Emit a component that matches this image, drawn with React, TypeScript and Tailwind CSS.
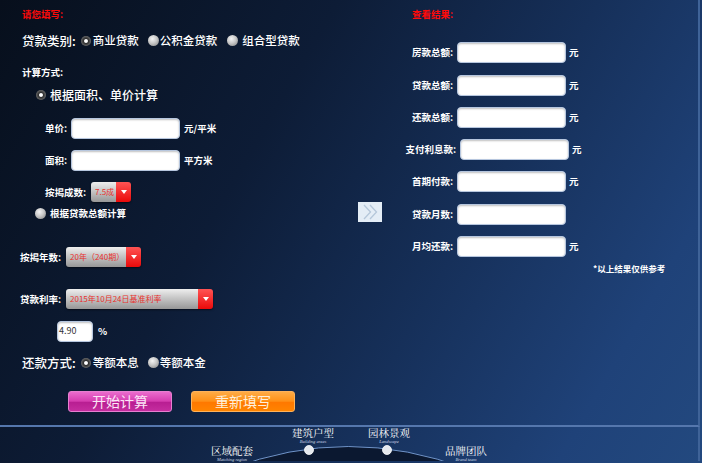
import React from 'react';

function Radio({ on }: { on?: boolean }) {
  return on ? (
    <span className="inline-block w-[10px] h-[10px] rounded-full shrink-0 bg-[radial-gradient(circle,#ffffff_0%,#ffffff_20%,#2e2e2e_34%,#5a5a5a_62%,#a8a8a8_100%)]" />
  ) : (
    <span className="inline-block w-[11px] h-[11px] rounded-full shrink-0 bg-[radial-gradient(circle_at_40%_35%,#f4f4f4_0%,#c8c8c8_45%,#7c7c7c_100%)]" />
  );
}

function Field({ cls, value }: { cls: string; value?: string }) {
  return (
    <div
      className={`h-[21px] bg-white rounded-[4px] border border-[#b6c6de] shadow-[inset_0_1px_2px_rgba(0,0,0,0.25)] flex items-center text-[9px] font-normal text-[#333] ${cls}`}
    >
      {value}
    </div>
  );
}

function Sel({ cls, text }: { cls: string; text: string }) {
  return (
    <div className={`flex h-[20px] rounded-[3px] overflow-hidden shadow-[0_1px_2px_rgba(0,0,0,0.5)] ${cls}`}>
      <div className="flex-1 flex items-center pl-[4px] text-[8px] font-normal text-[#e8322e] bg-[linear-gradient(180deg,#eeeeee_0%,#c6c6c6_45%,#979797_100%)] whitespace-nowrap overflow-hidden">
        {text}
      </div>
      <div className="w-[15px] flex items-center justify-center bg-[linear-gradient(180deg,#ff5454_0%,#ea0a0a_100%)]">
        <svg width="6" height="4" viewBox="0 0 6 4">
          <path d="M0 0H6L3 4Z" fill="#ffffff" />
        </svg>
      </div>
    </div>
  );
}

function ResultRow({ label, unit, cls }: { label: string; unit?: boolean; cls: string }) {
  return (
    <div className={`flex items-center h-[22px] ${cls}`}>
      <div className="w-[58px] text-right text-[9.5px] font-bold text-white whitespace-nowrap">{label}</div>
      <Field cls="w-[109px] ml-[4px]" />
      {unit && <span className="ml-[3px] text-[9.5px] font-bold text-white">元</span>}
    </div>
  );
}

export default function App() {
  return (
    <div className="w-[702px] h-[463px] overflow-hidden font-['Noto_Sans_CJK_SC','Noto_Sans',sans-serif] bg-[linear-gradient(120deg,#070f1c_0%,#0d1c36_35%,#16305a_62%,#1f4279_85%,#23497f_100%)]">
      <div className="h-[427px] flex border-b-[2px] border-[#5577ad] border-r-[2px] border-r-[#3f6398] w-[700px]">
        {/* Left column */}
        <div className="w-[350px] flex flex-col pl-[22px] text-white">
          <div className="mt-[6px] h-[16px] flex items-center text-[9.5px] font-bold text-[#ff0a0a]">请您填写:</div>

          <div className="mt-[9px] h-[20px] flex items-center text-[12.5px] font-medium whitespace-nowrap">
            <span>贷款类别:</span>
            <span className="ml-[5px]"><Radio on /></span>
            <span className="ml-[2px] text-[11.5px]">商业贷款</span>
            <span className="ml-[9px]"><Radio /></span>
            <span className="ml-[1px] text-[11.5px]">公积金贷款</span>
            <span className="ml-[10px]"><Radio /></span>
            <span className="ml-[4px] text-[11.5px]">组合型贷款</span>
          </div>

          <div className="mt-[13px] h-[16px] flex items-center text-[9.5px] font-bold">计算方式:</div>

          <div className="mt-[5px] h-[20px] flex items-center pl-[14px] text-[12px] font-medium">
            <Radio on />
            <span className="ml-[4px]">根据面积、单价计算</span>
          </div>

          <div className="mt-[12px] h-[22px] flex items-center pl-[23px] text-[9.5px] font-bold">
            <span className="w-[26px]">单价:</span>
            <Field cls="w-[109px]" />
            <span className="ml-[4px]">元/平米</span>
          </div>

          <div className="mt-[10px] h-[22px] flex items-center pl-[23px] text-[9.5px] font-bold">
            <span className="w-[26px]">面积:</span>
            <Field cls="w-[109px]" />
            <span className="ml-[4px]">平方米</span>
          </div>

          <div className="mt-[10px] h-[22px] flex items-center pl-[23px] text-[9.5px] font-bold">
            <span className="w-[46px]">按揭成数:</span>
            <Sel cls="w-[40px]" text="7.5成" />
          </div>

          <div className="mt-[1px] h-[18px] flex items-center pl-[13px] text-[9.5px] font-bold">
            <Radio />
            <span className="ml-[4px]">根据贷款总额计算</span>
          </div>

          <div className="mt-[24px] h-[22px] flex items-center ml-[-2px] text-[9.5px] font-bold">
            <span className="w-[46px]">按揭年数:</span>
            <Sel cls="w-[75px]" text="20年（240期）" />
          </div>

          <div className="mt-[20px] h-[22px] flex items-center ml-[-2px] text-[9.5px] font-bold">
            <span className="w-[46px]">贷款利率:</span>
            <Sel cls="w-[147px]" text="2015年10月24日基准利率" />
          </div>

          <div className="mt-[10px] h-[22px] flex items-center pl-[35px] text-[9.5px] font-bold">
            <Field cls="w-[36px] pl-[1px]" value="4.90" />
            <span className="ml-[5px]">%</span>
          </div>

          <div className="mt-[11px] h-[20px] flex items-center text-[12.5px] font-medium whitespace-nowrap">
            <span>还款方式:</span>
            <span className="ml-[5px]"><Radio on /></span>
            <span className="ml-[2px] text-[11.5px]">等额本息</span>
            <span className="ml-[9px]"><Radio /></span>
            <span className="ml-[1px] text-[11.5px]">等额本金</span>
          </div>

          <div className="mt-[17px] h-[22px] flex items-center pl-[46px] gap-[19px]">
            <div className="w-[104px] h-[21px] rounded-[3px] flex items-center justify-center text-[14px] text-[#fbe6f6] border border-[#e77fd0] bg-[linear-gradient(180deg,#ea6ccd_0%,#d63db0_48%,#b81e92_55%,#c52d9f_100%)]">
              开始计算
            </div>
            <div className="w-[104px] h-[21px] rounded-[3px] flex items-center justify-center text-[14px] text-[#fff0dc] border border-[#ffb25a] bg-[linear-gradient(180deg,#ffab45_0%,#ff9118_48%,#ff7800_55%,#ff8400_100%)]">
              重新填写
            </div>
          </div>
        </div>

        {/* Middle */}
        <div className="w-[45px] flex flex-col">
          <div className="mt-[202px] ml-[8px] w-[24px] h-[20px]">
            <svg width="24" height="20" viewBox="0 0 24 20">
              <rect x="0" y="0" width="24" height="20" fill="#e4edf6" />
              <path d="M6 3 L12.5 10 L6 17" fill="none" stroke="#b5c7da" strokeWidth="1.3" />
              <path d="M12 3 L18.5 10 L12 17" fill="none" stroke="#b5c7da" strokeWidth="1.3" />
            </svg>
          </div>
        </div>

        {/* Right column */}
        <div className="flex-1 flex flex-col">
          <div className="mt-[6px] h-[16px] pl-[17px] flex items-center text-[9.5px] font-bold text-[#ff0a0a]">查看结果:</div>
          <ResultRow cls="mt-[19px]" label="房款总额:" unit />
          <ResultRow cls="mt-[11px]" label="贷款总额:" unit />
          <ResultRow cls="mt-[10px]" label="还款总额:" unit />
          <ResultRow cls="mt-[10px] ml-[3px]" label="支付利息款:" unit />
          <ResultRow cls="mt-[10px]" label="首期付款:" unit />
          <ResultRow cls="mt-[11px]" label="贷款月数:" />
          <ResultRow cls="mt-[10px]" label="月均还款:" unit />
          <div className="mt-[4px] h-[14px] pl-[198px] flex items-center text-[8.5px] font-bold text-white whitespace-nowrap">
            *以上结果仅供参考
          </div>
        </div>
      </div>

      {/* Bottom nav */}
      <div className="relative h-[34px] w-[700px] border-r-[2px] border-r-[#3f6398]">
        <svg className="absolute left-0 top-0" width="700" height="34" viewBox="0 0 700 34">
          <path d="M230 42 Q348 -3 467 42 Z" fill="#0b1830" />
          <path d="M230 42 Q348 -3 467 42" fill="none" stroke="#6f93c8" strokeWidth="1" />
          <circle cx="309" cy="23" r="4.5" fill="#e6e9ee" stroke="#ffffff" strokeWidth="0.8" />
          <circle cx="387" cy="23" r="4.5" fill="#e6e9ee" stroke="#ffffff" strokeWidth="0.8" />
        </svg>
        <div className="absolute left-[211px] top-[18px] flex flex-col items-center w-[42px]">
          <span className="text-[10.5px] leading-[12px] text-white font-['Noto_Serif_CJK_SC','Noto_Sans_CJK_SC',serif]">区域配套</span>
          <span className="text-[4.5px] leading-[5px] italic text-[#cfd8e6] font-['Liberation_Serif',serif]">Matching region</span>
        </div>
        <div className="absolute left-[292px] top-[0px] flex flex-col items-center w-[42px]">
          <span className="text-[10.5px] leading-[12px] text-white font-['Noto_Serif_CJK_SC','Noto_Sans_CJK_SC',serif]">建筑户型</span>
          <span className="text-[4.5px] leading-[5px] italic text-[#cfd8e6] font-['Liberation_Serif',serif]">Building areas</span>
        </div>
        <div className="absolute left-[368px] top-[0px] flex flex-col items-center w-[42px]">
          <span className="text-[10.5px] leading-[12px] text-white font-['Noto_Serif_CJK_SC','Noto_Sans_CJK_SC',serif]">园林景观</span>
          <span className="text-[4.5px] leading-[5px] italic text-[#cfd8e6] font-['Liberation_Serif',serif]">Landscape</span>
        </div>
        <div className="absolute left-[445px] top-[18px] flex flex-col items-center w-[42px]">
          <span className="text-[10.5px] leading-[12px] text-white font-['Noto_Serif_CJK_SC','Noto_Sans_CJK_SC',serif]">品牌团队</span>
          <span className="text-[4.5px] leading-[5px] italic text-[#cfd8e6] font-['Liberation_Serif',serif]">Brand team</span>
        </div>
      </div>
    </div>
  );
}
